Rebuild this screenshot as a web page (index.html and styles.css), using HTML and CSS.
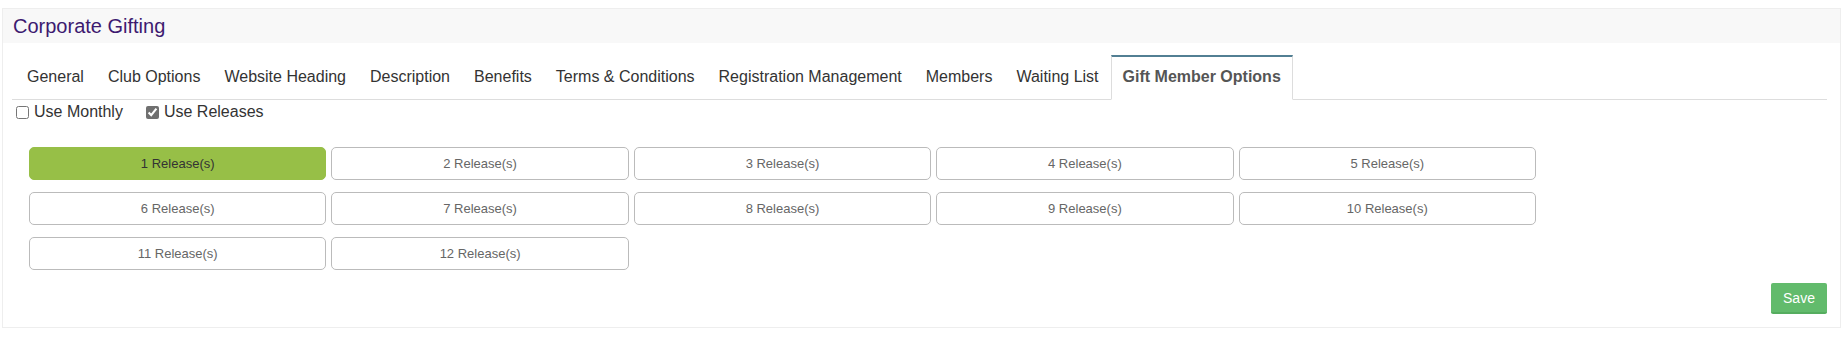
FILE: index.html
```html
<!DOCTYPE html>
<html lang="en">
<head>
<meta charset="utf-8">
<title>Corporate Gifting</title>
<link rel="stylesheet" href="styles.css">
</head>
<body>
<div class="panel">
  <div class="panel-heading"><h1 class="title">Corporate Gifting</h1></div>
  <div class="panel-body">
    <ul class="tabs">
      <li class="tab"><a>General</a></li>
      <li class="tab"><a>Club Options</a></li>
      <li class="tab"><a>Website Heading</a></li>
      <li class="tab"><a>Description</a></li>
      <li class="tab"><a>Benefits</a></li>
      <li class="tab"><a>Terms &amp; Conditions</a></li>
      <li class="tab"><a>Registration Management</a></li>
      <li class="tab"><a>Members</a></li>
      <li class="tab"><a>Waiting List</a></li>
      <li class="tab active"><a>Gift Member Options</a></li>
    </ul>
    <div class="options">
      <label class="check"><input type="checkbox">Use Monthly</label>
      <label class="check"><input type="checkbox" checked>Use Releases</label>
    </div>
    <div class="releases">
      <button class="rel selected">1 Release(s)</button>
      <button class="rel">2 Release(s)</button>
      <button class="rel">3 Release(s)</button>
      <button class="rel">4 Release(s)</button>
      <button class="rel">5 Release(s)</button>
      <button class="rel">6 Release(s)</button>
      <button class="rel">7 Release(s)</button>
      <button class="rel">8 Release(s)</button>
      <button class="rel">9 Release(s)</button>
      <button class="rel">10 Release(s)</button>
      <button class="rel">11 Release(s)</button>
      <button class="rel">12 Release(s)</button>
    </div>
    <div class="actions"><button class="save">Save</button></div>
  </div>
</div>
</body>
</html>
```
FILE: styles.css
```css
html, body {
  margin: 0;
  padding: 0;
  background: #fff;
}
body {
  font-family: "Liberation Sans", Arial, sans-serif;
  color: #333;
}
.panel {
  margin: 8px 6px 0 2px;
  border: 1px solid #eeeeee;
  height: 320px;
  box-sizing: border-box;
  display: flex;
  flex-direction: column;
}
.panel-heading {
  background: #f8f8f8;
  height: 34px;
  padding-left: 10px;
  display: flex;
  align-items: center;
}
.title {
  margin: 0;
  font-size: 20px;
  font-weight: normal;
  color: #3d1a70;
  line-height: 24px;
}
.panel-body {
  flex: 1;
  padding: 0 13px 0 9px;
  display: flex;
  flex-direction: column;
}
.tabs {
  list-style: none;
  margin: 12px 0 0 0;
  padding: 0 0 0 3px;
  display: flex;
  border-bottom: 1px solid #dddddd;
}
.tab {
  margin-bottom: -1px;
}
.tab a {
  display: block;
  font-size: 16px;
  line-height: 20px;
  padding: 10px 11px 12px;
  border: 1px solid transparent;
  border-top-width: 2px;
  color: #333;
  white-space: nowrap;
}
.tab.active a {
  border-color: #dddddd;
  border-top-color: #527f93;
  border-bottom-color: #fff;
  background: #fff;
  font-weight: bold;
  color: #555;
}
.options {
  display: flex;
  gap: 23px;
  padding: 2px 0 0 4px;
  height: 20px;
  align-items: center;
}
.check {
  display: flex;
  align-items: center;
  font-size: 16px;
  line-height: 20px;
  color: #333;
}
.check input {
  margin: 0 5px 0 0;
  width: 13px;
  height: 13px;
  accent-color: #707070;
}
.releases {
  display: grid;
  width: 1507px;
  grid-template-columns: repeat(5, 1fr);
  gap: 12px 5px;
  margin: 25px 0 0 17px;
}
.rel {
  height: 33px;
  border: 1px solid #bbbbbb;
  border-radius: 5px;
  background: #fff;
  color: #666;
  font-family: "Liberation Sans", Arial, sans-serif;
  font-size: 13px;
  padding: 0;
}
.rel.selected {
  background: #97bf47;
  border-color: #97bf47;
  color: #333;
}
.actions {
  display: flex;
  justify-content: flex-end;
  margin-top: 13px;
}
.save {
  width: 56px;
  height: 31px;
  background: #62bb6c;
  border: 0;
  border-bottom: 2px solid #55ad5f;
  border-radius: 2px;
  color: #fff;
  font-family: "Liberation Sans", Arial, sans-serif;
  font-size: 14px;
  padding: 0;
}
```
